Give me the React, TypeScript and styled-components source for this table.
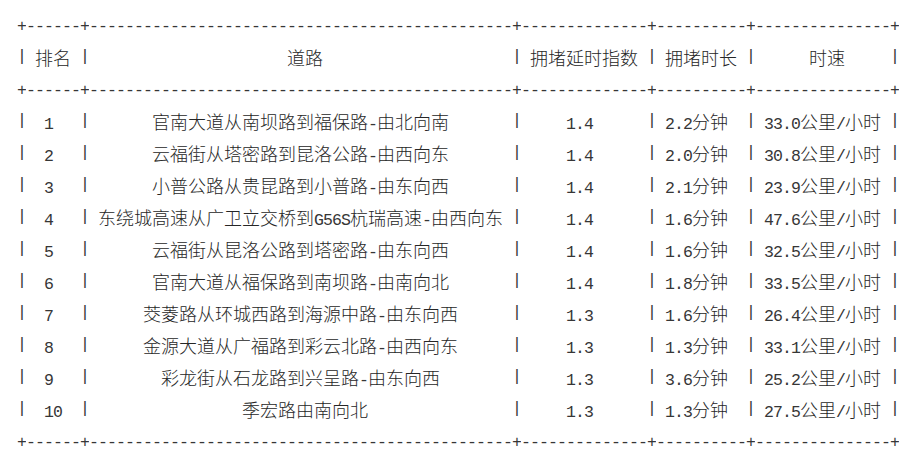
import React from "react";
import styled, { createGlobalStyle } from "styled-components";

const UNIT = 9;

const GlobalStyle = createGlobalStyle`
  html, body { background: #ffffff; }
  body { margin: 8px; }
`;

type Row = [string, string, string, string, string];

const HEADER: Row = ["排名", "道路", "拥堵延时指数", "拥堵时长", "时速"];

const ROWS: Row[] = [
  ["1", "官南大道从南坝路到福保路-由北向南", "1.4", "2.2分钟", "33.0公里/小时"],
  ["2", "云福街从塔密路到昆洛公路-由西向东", "1.4", "2.0分钟", "30.8公里/小时"],
  ["3", "小普公路从贵昆路到小普路-由东向西", "1.4", "2.1分钟", "23.9公里/小时"],
  ["4", "东绕城高速从广卫立交桥到G56S杭瑞高速-由西向东", "1.4", "1.6分钟", "47.6公里/小时"],
  ["5", "云福街从昆洛公路到塔密路-由东向西", "1.4", "1.6分钟", "32.5公里/小时"],
  ["6", "官南大道从福保路到南坝路-由南向北", "1.4", "1.8分钟", "33.5公里/小时"],
  ["7", "茭菱路从环城西路到海源中路-由东向西", "1.3", "1.6分钟", "26.4公里/小时"],
  ["8", "金源大道从广福路到彩云北路-由西向东", "1.3", "1.3分钟", "33.1公里/小时"],
  ["9", "彩龙街从石龙路到兴呈路-由东向西", "1.3", "3.6分钟", "25.2公里/小时"],
  ["10", "季宏路由南向北", "1.3", "1.3分钟", "27.5公里/小时"],
];

const isWide = (c: string) => c.charCodeAt(0) > 0x2e80;
const textWidth = (s: string) => [...s].reduce((a, c) => a + (isWide(c) ? 2 : 1), 0);

const COLS = HEADER.map((_, i) =>
  Math.max(...[HEADER, ...ROWS].map((r) => textWidth(r[i])))
);

// prettytable-style centring
const leftPad = (text: string, width: number) => {
  const w = textWidth(text);
  const excess = width - w;
  if (excess % 2) {
    return w % 2 ? Math.floor(excess / 2) : Math.floor(excess / 2) + 1;
  }
  return excess / 2;
};

const splitRuns = (s: string) => {
  const runs: { wide: boolean; text: string }[] = [];
  for (const c of s) {
    const wide = isWide(c);
    const last = runs[runs.length - 1];
    if (last && last.wide === wide) last.text += c;
    else runs.push({ wide, text: c });
  }
  return runs;
};

const Sheet = styled.div`
  display: flex;
  flex-direction: column;
  padding: 1px 0 0 ${UNIT}px;
  font-family: "Liberation Mono", "DejaVu Sans Mono", monospace;
  font-size: 16.5px;
  letter-spacing: -0.9px;
  line-height: 32px;
  color: #363636;
  white-space: nowrap;
`;

const Rule = styled.div`
  display: flex;
  height: 32px;
  padding-top: 1.5px;
  box-sizing: border-box;
`;

const Joint = styled.span`
  display: block;
  width: ${UNIT}px;
  overflow: hidden;
`;

const Dashes = styled.span<{ $span: number }>`
  display: block;
  width: ${(p) => p.$span * UNIT}px;
  overflow: hidden;
`;

const Line = styled.div`
  display: flex;
  height: 32px;
`;

const Pipe = styled.span`
  display: block;
  width: ${UNIT}px;
  overflow: hidden;
`;

const Cell = styled.span<{ $span: number; $indent: number }>`
  display: block;
  width: ${(p) => p.$span * UNIT}px;
  height: 32px;
  padding: 3.5px 0 0 ${(p) => p.$indent * UNIT}px;
  box-sizing: border-box;
`;

const Han = styled.span`
  font-family: "Noto Sans CJK SC", "Noto Sans CJK JP", sans-serif;
  font-size: 18px;
  font-weight: 300;
  letter-spacing: 0;
  line-height: 18px;
  color: #262626;
`;

const Border = () => (
  <Rule>
    <Joint>+</Joint>
    {COLS.map((w, i) => (
      <React.Fragment key={i}>
        <Dashes $span={w + 2}>{"-".repeat(w + 2)}</Dashes>
        <Joint>+</Joint>
      </React.Fragment>
    ))}
  </Rule>
);

const TableLine = ({ row }: { row: Row }) => (
  <Line>
    <Pipe>|</Pipe>
    {row.map((text, i) => (
      <React.Fragment key={i}>
        <Cell $span={COLS[i] + 2} $indent={1 + leftPad(text, COLS[i])}>
          {splitRuns(text).map((r, j) =>
            r.wide ? <Han key={j}>{r.text}</Han> : <span key={j}>{r.text}</span>
          )}
        </Cell>
        <Pipe>|</Pipe>
      </React.Fragment>
    ))}
  </Line>
);

export default function App() {
  return (
    <>
      <GlobalStyle />
      <Sheet>
        <Border />
        <TableLine row={HEADER} />
        <Border />
        {ROWS.map((r) => (
          <TableLine key={r[0]} row={r} />
        ))}
        <Border />
      </Sheet>
    </>
  );
}
